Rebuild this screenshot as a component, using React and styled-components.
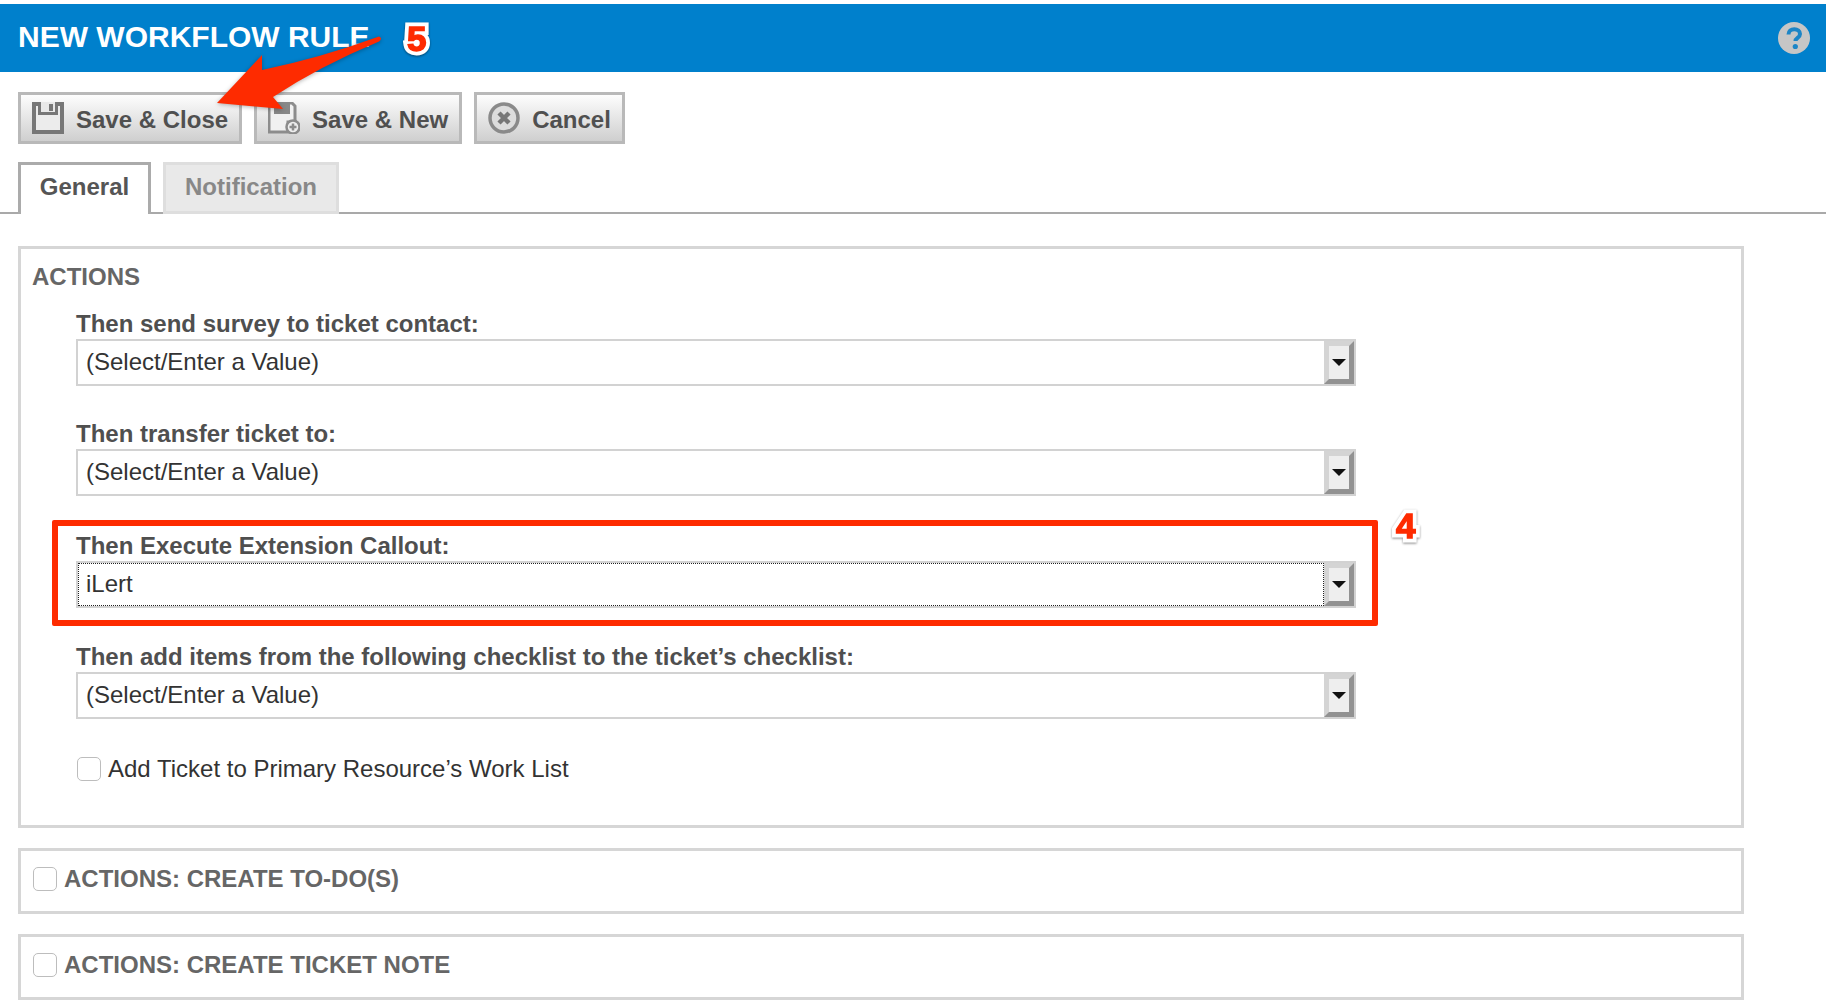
import React from "react";
import styled, { createGlobalStyle } from "styled-components";

const GlobalStyle = createGlobalStyle`
  html, body {
    margin: 0;
    padding: 0;
    background: #fff;
    font-family: "Liberation Sans", Arial, sans-serif;
  }
`;

const Page = styled.div`
  position: relative;
  width: 1826px;
  height: 1002px;
  overflow: hidden;
  padding-top: 4px;
  box-sizing: border-box;
`;

const Header = styled.div`
  display: flex;
  align-items: center;
  justify-content: space-between;
  height: 68px;
  padding: 0 16px 0 18px;
  background: #0080cc;

  svg {
    filter: blur(0.4px);
  }
`;

const Title = styled.h1`
  margin: 0 0 2px;
  font-size: 30px;
  font-weight: bold;
  color: #fff;
`;

const Toolbar = styled.div`
  display: flex;
  gap: 12px;
  padding: 20px 0 0 18px;
`;

const Button = styled.div`
  display: flex;
  align-items: center;
  gap: 12px;
  height: 52px;
  box-sizing: border-box;
  padding: 0 11px;
  border: 3px solid #b9b9b9;
  background: linear-gradient(#fdfdfd, #cfcfcf);
  font-size: 24px;
  font-weight: bold;
  color: #505050;

  svg {
    filter: blur(0.5px);
  }
`;

const ButtonText = styled.span`
  padding-top: 3px;
`;

const TabBar = styled.div`
  display: flex;
  gap: 12px;
  height: 50px;
  margin-top: 18px;
  padding-left: 18px;
  border-bottom: 2px solid #a9a9a9;
`;

const Tab = styled.div`
  display: flex;
  align-items: center;
  justify-content: center;
  width: ${props => props.$width}px;
  height: 52px;
  box-sizing: border-box;
  padding-bottom: ${props => (props.$active ? 5 : 2)}px;
  font-size: 24px;
  font-weight: bold;
  border: 3px solid ${props => (props.$active ? "#ababab" : "#dedede")};
  border-bottom: ${props => (props.$active ? "none" : "3px solid #dedede")};
  background: ${props => (props.$active ? "#fff" : "#e9e9e9")};
  color: ${props => (props.$active ? "#555" : "#888")};
`;

const Panel = styled.div`
  width: 1726px;
  margin: ${props => props.$top}px 0 0 18px;
  box-sizing: border-box;
  height: ${props => props.$height}px;
  border: 3px solid #d6d6d6;
`;

const ActionsTitle = styled.div`
  padding: 14px 0 0 11px;
  font-size: 24px;
  line-height: 28px;
  font-weight: bold;
  color: #666;
`;

const Fields = styled.div`
  padding: 0 0 0 55px;
`;

const Field = styled.div`
  margin-top: ${props => props.$top}px;
`;

const Label = styled.div`
  height: 30px;
  font-size: 24px;
  line-height: 30px;
  font-weight: bold;
  color: #4f4f4f;
`;

const Select = styled.div`
  display: flex;
  width: 1280px;
  height: 47px;
  box-sizing: border-box;
  border: 2px solid #d2d2d2;
`;

const SelectValue = styled.div`
  flex: 1;
  padding-left: 8px;
  font-size: 24px;
  line-height: 41px;
  color: #333;
  outline: ${props => (props.$focused ? "1px dotted #222" : "none")};
  outline-offset: -1px;
`;

const SelectButton = styled.div`
  display: flex;
  align-items: center;
  justify-content: center;
  width: 30px;
  box-sizing: border-box;
  border-style: solid;
  border-width: 5px;
  border-color: #d4d4d4 #929292 #929292 #d4d4d4;
  background: #eee;

  &::after {
    content: "";
    border-style: solid;
    border-width: 7px 7px 0;
    border-color: #111 transparent transparent;
  }
`;

const CheckRow = styled.label`
  display: flex;
  align-items: center;
  gap: 7px;
  margin-top: ${props => props.$top || 0}px;
  padding-left: 1px;
  font-size: 24px;
  color: #333;
`;

const CheckBox = styled.span`
  width: 24px;
  height: 24px;
  box-sizing: border-box;
  border: 1.5px solid #bdbdbd;
  border-radius: 5px;
  background: #fff;
`;

const CollapsedRow = styled.div`
  display: flex;
  align-items: center;
  gap: 7px;
  height: 100%;
  box-sizing: border-box;
  padding: 0 0 4px 12px;
  font-size: 24px;
  font-weight: bold;
  color: #666;
`;

const Highlight = styled.div`
  position: absolute;
  left: 52px;
  top: 520px;
  width: 1326px;
  height: 106px;
  box-sizing: border-box;
  border: 6px solid #fe2b00;
  border-radius: 2px;
`;

const Callout = styled.span`
  position: absolute;
  left: ${props => props.$left}px;
  top: ${props => props.$top}px;
  isolation: isolate;
  font-family: "Liberation Sans", Arial, sans-serif;
  font-size: 35px;
  line-height: 36px;
  font-weight: bold;
  color: #fe2b00;
  -webkit-text-stroke: 1.5px #fe2b00;
  filter: drop-shadow(0 1px 1px rgba(0, 0, 0, 0.45));

  &::before {
    content: attr(data-digit);
    position: absolute;
    left: 0;
    top: 0;
    z-index: -1;
    -webkit-text-stroke: 9px #fff;
  }
`;

const ArrowSvg = styled.svg`
  position: absolute;
  left: 0;
  top: 0;
  filter: drop-shadow(0 1px 2px rgba(0, 0, 0, 0.3));
`;

function SaveIcon() {
  return (
    <svg width="32" height="32" viewBox="0 0 32 32">
      <path d="M0 0h32v32H0z" fill="#777" />
      <path d="M4 4h24v24H4z" fill="#ececec" />
      <path d="M6 0h20v13H6z" fill="#777" />
      <path d="M9 0h14v10H9z" fill="#e8e8e8" />
      <path d="M17 2h4v7h-4z" fill="#777" />
    </svg>
  );
}

function SaveNewIcon() {
  return (
    <svg width="32" height="32" viewBox="0 0 32 32">
      <path d="M1 1h23l3 3v16h-7v10H1z" fill="#f1f1f1" stroke="#8c8c8c" strokeWidth="3" />
      <path d="M6 0h16v12H6z" fill="#888" />
      <circle cx="25" cy="25" r="6.5" fill="#eee" stroke="#8c8c8c" strokeWidth="2.5" />
      <path d="M25 21.5v7M21.5 25h7" stroke="#8c8c8c" strokeWidth="2.5" />
    </svg>
  );
}

function CancelIcon() {
  return (
    <svg width="32" height="32" viewBox="0 0 32 32">
      <circle cx="16" cy="16" r="14" fill="#ddd" stroke="#8a8a8a" strokeWidth="3.5" />
      <path d="M11 11l10 10M21 11L11 21" stroke="#777" strokeWidth="4.5" />
    </svg>
  );
}

function HelpIcon() {
  return (
    <svg width="32" height="32" viewBox="0 0 32 32">
      <circle cx="16" cy="16" r="16" fill="#c6c6c6" />
      <path
        d="M10.5 12.5c0-3.4 2.6-5.3 5.8-5.3 3.300 0 5.700 1.900 5.700 4.700 0 4-4.500 3.900-4.500 7.100"
        fill="none"
        stroke="#1c85c6"
        strokeWidth="4"
      />
      <circle cx="17.300" cy="24.500" r="2.600" fill="#1c85c6" />
    </svg>
  );
}

function ComboField({ label, value, top, focused }) {
  return (
    <Field $top={top}>
      <Label>{label}</Label>
      <Select>
        <SelectValue $focused={focused}>{value}</SelectValue>
        <SelectButton />
      </Select>
    </Field>
  );
}

export default function App() {
  return (
    <Page>
      <GlobalStyle />
      <Header>
        <Title>NEW WORKFLOW RULE</Title>
        <HelpIcon />
      </Header>
      <Toolbar>
        <Button>
          <SaveIcon />
          <ButtonText>Save &amp; Close</ButtonText>
        </Button>
        <Button>
          <SaveNewIcon />
          <ButtonText>Save &amp; New</ButtonText>
        </Button>
        <Button>
          <CancelIcon />
          <ButtonText>Cancel</ButtonText>
        </Button>
      </Toolbar>
      <TabBar>
        <Tab $active $width={133}>
          General
        </Tab>
        <Tab $width={176}>Notification</Tab>
      </TabBar>
      <Panel $top={32} $height={582}>
        <ActionsTitle>ACTIONS</ActionsTitle>
        <Fields>
          <ComboField label="Then send survey to ticket contact:" value="(Select/Enter a Value)" top={18} />
          <ComboField label="Then transfer ticket to:" value="(Select/Enter a Value)" top={33} />
          <ComboField label="Then Execute Extension Callout:" value="iLert" top={35} focused />
          <ComboField
            label="Then add items from the following checklist to the ticket’s checklist:"
            value="(Select/Enter a Value)"
            top={34}
          />
          <CheckRow $top={36}>
            <CheckBox />
            Add Ticket to Primary Resource’s Work List
          </CheckRow>
        </Fields>
      </Panel>
      <Panel $top={20} $height={66}>
        <CollapsedRow>
          <CheckBox />
          ACTIONS: CREATE TO-DO(S)
        </CollapsedRow>
      </Panel>
      <Panel $top={20} $height={66}>
        <CollapsedRow>
          <CheckBox />
          ACTIONS: CREATE TICKET NOTE
        </CollapsedRow>
      </Panel>

      <Highlight />
      <ArrowSvg width="440" height="120" viewBox="0 0 440 120">
        <path
          d="M379 36.500 Q383 38 379 41.500 Q320 66 273 97 L283 109 L217 103 L262 55 L262 70 Q320 58 379 36.500 Z"
          fill="#fe2b00"
        />
      </ArrowSvg>
      <Callout $left={407} $top={21} data-digit="5">5</Callout>
      <Callout $left={1396} $top={508} data-digit="4">4</Callout>
    </Page>
  );
}
